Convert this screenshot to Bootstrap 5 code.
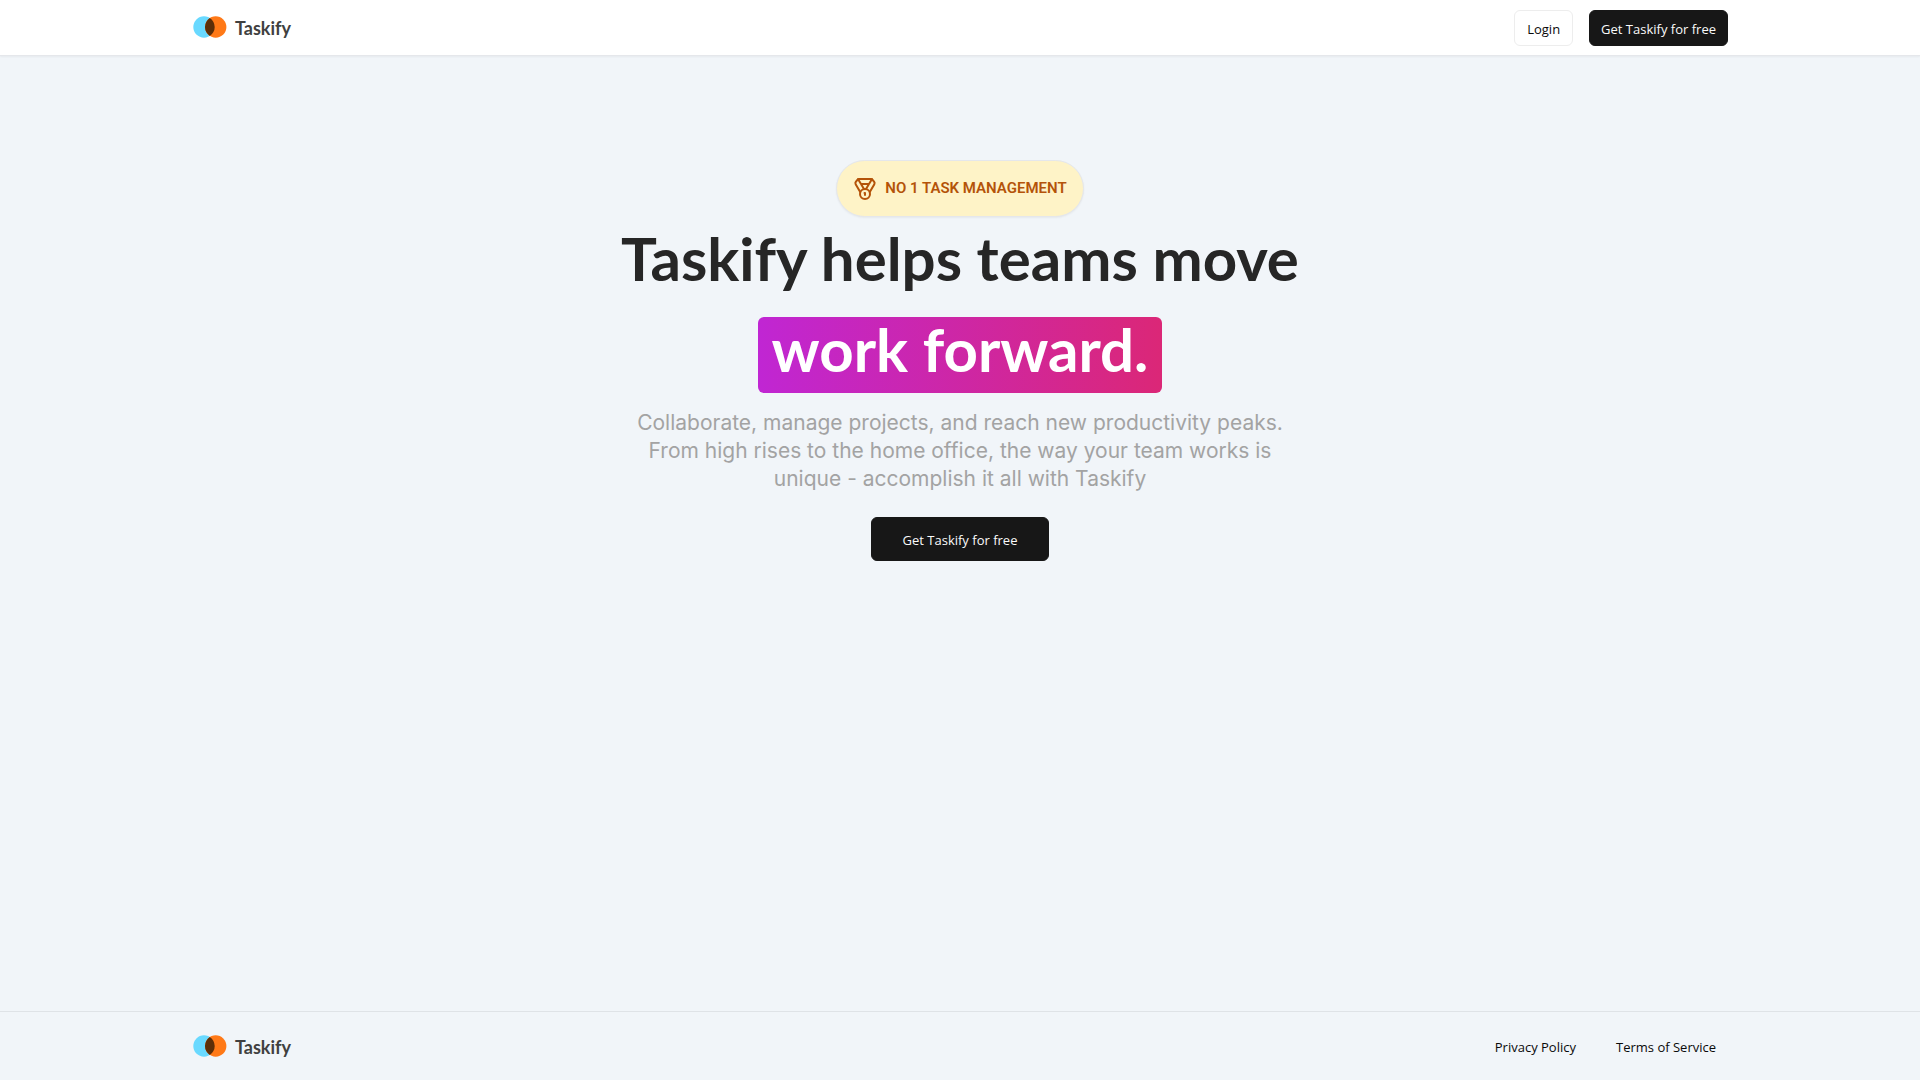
<!DOCTYPE html>
<html lang="en">
<head>
<meta charset="utf-8">
<meta name="viewport" content="width=device-width, initial-scale=1">
<title>Taskify</title>
<link href="https://cdn.jsdelivr.net/npm/bootstrap@5.3.0/dist/css/bootstrap.min.css" rel="stylesheet">
<style>
body { background: #f1f5f9; color: #0a0a0a; font-family: "Open Sans", "Noto Sans", sans-serif; font-size: 13px; line-height: 20px; }
.site-width { max-width: 1536px; }
.site-header { height: 56px; background: #fff; border-bottom: 1px solid #e5e7eb; box-shadow: 0 1px 2px rgba(0,0,0,.05); }
.site-footer { height: 69px; border-top: 1px solid #dfe3e7; }
.brand { color: #404040; font: 700 18px/28px Lato, sans-serif; gap: 8px; padding-left: 1px; padding-bottom: 1px; }
.brand span { padding-top: 2px; }
.btn { --bs-btn-font-size: 13px; --bs-btn-line-height: 20px; --bs-btn-border-radius: 6px; --bs-btn-padding-x: 11px; padding-top: 8px; padding-bottom: 6px; }
.btn-ink { --bs-btn-bg: #171717; --bs-btn-color: #fafafa; --bs-btn-border-color: #171717; --bs-btn-hover-bg: #2e2e2e; --bs-btn-hover-color: #fafafa; }
.btn-plain { --bs-btn-padding-x: 12px; --bs-btn-bg: #fff; --bs-btn-color: #0a0a0a; --bs-btn-border-color: #ededed; --bs-btn-hover-bg: #f5f5f5; --bs-btn-hover-color: #0a0a0a; }
.btn-hero { --bs-btn-padding-x: 31px; padding-top: 12px; padding-bottom: 10px; }
.hero { padding-top: 104px; }
.award { padding: 15px 16px; color: #b45309; background: #fef3c7; border: 1px solid #e5e7eb; box-shadow: 0 1px 2px rgba(0,0,0,.05); font: 600 15px/24px Roboto, sans-serif; }
.award span { padding-bottom: 1px; }
.headline { font: 700 60px/60px Lato, sans-serif; color: #262626; }
.headline-top { line-height: 50px; padding-bottom: 10px; }
.highlight { color: #fff; background: linear-gradient(to right, #c026d3, #db2777); border-radius: 6px; padding: 2px 14px 14px; }
.pitch { font: 400 21px/28px Inter, sans-serif; color: #a3a3a3; max-width: 672px; }
.footer-link { color: #0a0a0a; padding: 1px 12px 0; }
</style>
</head>
<body class="d-flex flex-column min-vh-100">
<svg class="d-none" aria-hidden="true">
  <symbol id="logo" viewBox="0 0 34 22">
    <circle cx="11" cy="11" r="10.7" fill="#69d9ff"/>
    <circle cx="22.7" cy="11" r="10.7" fill="#ff7917"/>
    <path d="M16.85 2.04a10.7 10.7 0 0 1 0 17.92a10.7 10.7 0 0 1 0-17.92z" fill="#5c2e08"/>
  </symbol>
</svg>

<header class="site-header">
  <nav class="site-width h-100 mx-auto d-flex align-items-center justify-content-between">
    <a class="brand d-flex align-items-center text-decoration-none" href="#">
      <svg width="34" height="22" aria-hidden="true"><use href="#logo"/></svg><span>Taskify</span>
    </a>
    <div class="d-flex gap-3">
      <button type="button" class="btn btn-plain">Login</button>
      <button type="button" class="btn btn-ink">Get Taskify for free</button>
    </div>
  </nav>
</header>

<main class="hero flex-grow-1 d-flex flex-column align-items-center text-center">
  <div class="award rounded-pill d-flex align-items-center gap-2 mb-3">
    <svg width="24" height="24" viewBox="0 0 24 24" fill="none" stroke="currentColor" stroke-width="2" stroke-linecap="round" stroke-linejoin="round" aria-hidden="true">
      <path d="M7.21 15 2.66 7.14a2 2 0 0 1 .13-2.2L4.4 2.8A2 2 0 0 1 6 2h12a2 2 0 0 1 1.6.8l1.6 2.14a2 2 0 0 1 .14 2.2L16.79 15"/>
      <path d="M11 12 5.12 2.2M13 12l5.88-9.8M8 7h8"/>
      <circle cx="12" cy="17" r="5"/>
      <path d="M12 18v-2h-.5"/>
    </svg>
    <span>NO 1 TASK MANAGEMENT</span>
  </div>
  <h1 class="headline d-flex flex-column align-items-center gap-4 mb-3">
    <span class="headline-top">Taskify helps teams move</span>
    <span class="highlight">work forward.</span>
  </h1>
  <p class="pitch mb-4">Collaborate, manage projects, and reach new productivity peaks.<br>From high rises to the home office, the way your team works is<br>unique - accomplish it all with Taskify</p>
  <button type="button" class="btn btn-ink btn-hero">Get Taskify for free</button>
</main>

<footer class="site-footer">
  <div class="site-width h-100 mx-auto d-flex align-items-center justify-content-between">
    <a class="brand d-flex align-items-center text-decoration-none" href="#">
      <svg width="34" height="22" aria-hidden="true"><use href="#logo"/></svg><span>Taskify</span>
    </a>
    <div class="d-flex gap-3">
      <a class="footer-link text-decoration-none" href="#">Privacy Policy</a>
      <a class="footer-link text-decoration-none" href="#">Terms of Service</a>
    </div>
  </div>
</footer>
<script src="https://cdn.jsdelivr.net/npm/bootstrap@5.3.0/dist/js/bootstrap.bundle.min.js"></script>
</body>
</html>
